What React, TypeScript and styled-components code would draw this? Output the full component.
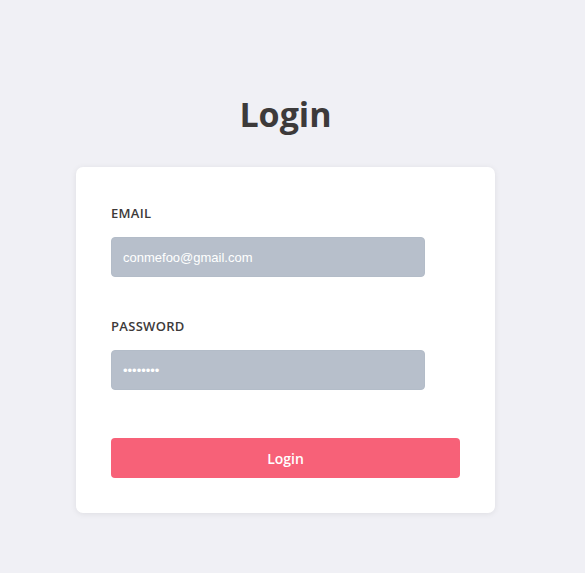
import React from "react";
import styled, { createGlobalStyle } from "styled-components";

const Global = createGlobalStyle`
  html, body { margin: 0; padding: 0; background: #f0f0f5; }
  body { font-family: "Open Sans", "Noto Sans", sans-serif; }
  * { box-sizing: border-box; }
`;

const Page = styled.div`
  width: 571px;
  min-height: 573px;
  display: flex;
  flex-direction: column;
  align-items: center;
  padding-top: 90px;
`;

const Title = styled.h1`
  margin: 0 0 29px;
  font-size: 34px;
  line-height: 48px;
  font-weight: 700;
  color: #3d3a3a;
`;

const Card = styled.form`
  width: 419px;
  background: #ffffff;
  border-radius: 7px;
  box-shadow: 0 1px 6px rgba(0, 0, 0, 0.08);
  padding: 37px 35px 35px;
  display: flex;
  flex-direction: column;
`;

const Field = styled.div<{ $gap?: number }>`
  display: flex;
  flex-direction: column;
  margin-bottom: ${(p) => p.$gap ?? 0}px;
`;

const Label = styled.label`
  font-size: 13px;
  line-height: 18px;
  font-weight: 600;
  letter-spacing: 0.3px;
  color: #3d3a3a;
  margin-bottom: 15px;
`;

const Input = styled.input`
  width: 314px;
  height: 40px;
  border: 1px solid #b3bcc8;
  border-radius: 4px;
  background: #b7bfcb;
  padding: 0 11px;
  font-family: "Liberation Sans", Arial, sans-serif;
  font-size: 13px;
  color: #ffffff;
  outline: none;
`;

const Button = styled.button`
  width: 349px;
  height: 40px;
  border: none;
  border-radius: 4px;
  background: #f76178;
  color: #ffffff;
  font-family: "Open Sans", "Noto Sans", sans-serif;
  font-size: 14px;
  font-weight: 600;
  padding-top: 2px;
  cursor: pointer;
`;

export default function App() {
  return (
    <>
      <Global />
      <Page>
        <Title>Login</Title>
        <Card onSubmit={(e) => e.preventDefault()}>
          <Field $gap={40}>
            <Label>EMAIL</Label>
            <Input type="email" defaultValue="conmefoo@gmail.com" />
          </Field>
          <Field $gap={48}>
            <Label>PASSWORD</Label>
            <Input type="password" defaultValue="password" />
          </Field>
          <Button type="submit">Login</Button>
        </Card>
      </Page>
    </>
  );
}
